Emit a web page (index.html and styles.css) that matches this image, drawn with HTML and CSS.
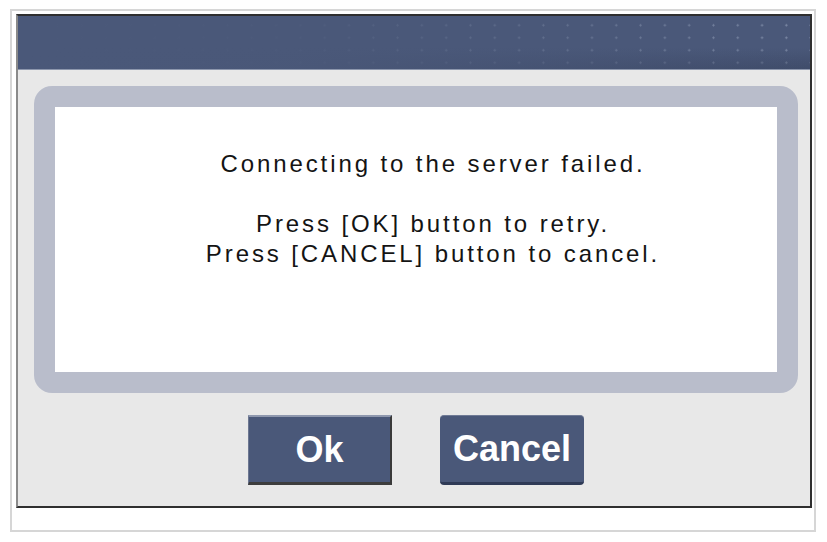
FILE: index.html
```html
<!DOCTYPE html>
<html>
<head>
<meta charset="utf-8">
<link rel="stylesheet" href="styles.css">
</head>
<body>
<div class="frame">
  <div class="dialog">
    <div class="header"></div>
    <div class="panel">
      <div class="message">
        <p class="line">Connecting to the server failed.</p>
        <p class="line blank">&nbsp;</p>
        <p class="line">Press [OK] button to retry.</p>
        <p class="line">Press [CANCEL] button to cancel.</p>
      </div>
    </div>
    <div class="buttons">
      <button class="btn btn-ok">Ok</button>
      <button class="btn btn-cancel">Cancel</button>
    </div>
  </div>
</div>
</body>
</html>
```
FILE: styles.css
```css
html, body {
  margin: 0;
  padding: 0;
  background: #ffffff;
}
.frame {
  box-sizing: border-box;
  width: 806px;
  height: 523px;
  margin: 9px 0 0 10px;
  border: 2px solid #d6d6d6;
  background: #ffffff;
  padding: 3px 2px 22px 4px;
}
.dialog {
  box-sizing: border-box;
  height: 100%;
  border-top: 2px solid #2f2f2f;
  border-right: 2px solid #2f2f2f;
  border-bottom: 2px solid #2f2f2f;
  border-left: 2px solid #8a8a8a;
  background: #e8e8e8;
  display: flex;
  flex-direction: column;
}
.header {
  height: 53px;
  border-bottom: 1px solid #8d97ad;
  background-color: #4a5879;
  background-image:
    linear-gradient(to right, #4a5879 0%, rgba(74,88,121,0.95) 35%, rgba(74,88,121,0.5) 70%, rgba(74,88,121,0) 100%),
    linear-gradient(to bottom, rgba(74,88,121,0) 0%, rgba(60,72,100,0.0) 60%, rgba(55,66,94,0.55) 100%),
    radial-gradient(circle at 50% 50%, rgba(170,182,205,0.55) 0.8px, rgba(170,182,205,0) 1.4px);
  background-size: 100% 100%, 100% 100%, 24.3px 12.5px;
  background-position: 0 0, 0 0, 3px 3px;
}
.panel {
  box-sizing: border-box;
  margin: 16px 12px 0 16px;
  height: 307px;
  border: 21px solid #b9bdcb;
  border-radius: 18px;
  background: #ffffff;
}
.message {
  padding: 42px 0 0 34px;
  text-align: center;
  font-family: "Liberation Sans", Arial, sans-serif;
  font-size: 24px;
  line-height: 30px;
  letter-spacing: 2.9px;
  color: #141414;
}
.line {
  margin: 0;
}
.buttons {
  margin: 22px 12px 0 16px;
  display: flex;
  justify-content: center;
  gap: 48px;
}
.btn {
  box-sizing: border-box;
  width: 144px;
  height: 70px;
  padding: 0;
  margin: 0;
  background: #4a5879;
  color: #ffffff;
  font-family: "Liberation Sans", Arial, sans-serif;
  font-weight: bold;
  font-size: 36px;
  line-height: 1;
  display: flex;
  align-items: center;
  justify-content: center;
}
.btn-ok {
  border-top: 2px solid #8f98ae;
  border-left: 1px solid #6d7791;
  border-right: 2px solid #3a3a3a;
  border-bottom: 3px solid #3d3d3d;
}
.btn-cancel {
  border: none;
  border-top: 1px solid #6f7a95;
  border-bottom: 3px solid #2f3a56;
  border-radius: 4px;
}
```
